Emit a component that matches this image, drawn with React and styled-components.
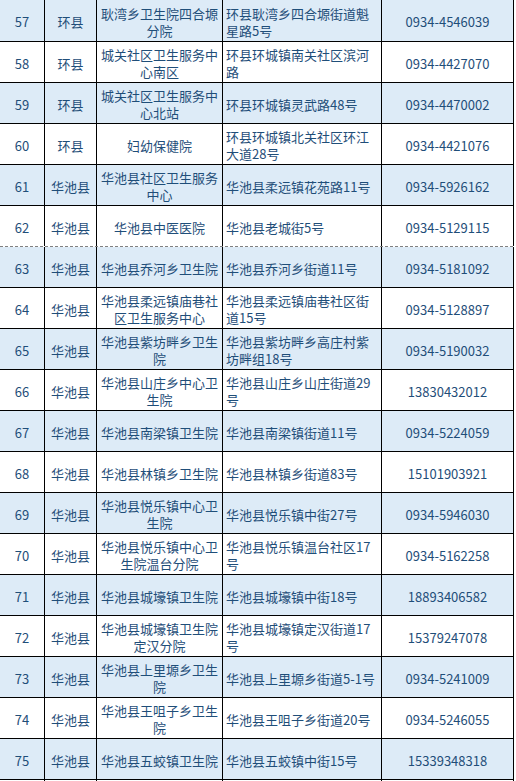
import React from 'react';
import styled, { createGlobalStyle, css, } from 'styled-components';


const GlobalStyle = createGlobalStyle`
body {
  margin: 0;
  background: #fff;
  font-family: "Noto Sans CJK SC", "Noto Sans", sans-serif;
}
`;

const Sheet = styled.div`
width: 514px;
color: #1f4e79;
font-size: 13px;
line-height: 17px;
`;

// page break line from the spreadsheet, drawn as a grey dash strip
const pageBreak = css`
border-bottom: none;
padding-bottom: 1px;
background:
  repeating-linear-gradient(90deg, #808080 0 3px, transparent 3px 5px) left bottom / 100% 1px no-repeat,
  ${({ $shaded, }) => $shaded ? '#ddebf7' : '#fff'};
`;

const Row = styled.div`
display: grid;
grid-template-columns: 45px 52px 126px 159px 132px;
box-sizing: border-box;
height: 41px;
border-bottom: 1px solid #000;
background: ${({ $shaded, }) => $shaded ? '#ddebf7' : '#fff'};
&:first-child {
  height: 42px;
}
${({ $break, }) => $break && pageBreak}
`;

const Cell = styled.div`
box-sizing: border-box;
display: flex;
align-items: center;
justify-content: ${({ $left, }) => $left ? 'flex-start' : 'center'};
text-align: ${({ $left, }) => $left ? 'left' : 'center'};
padding: 2px 3px 0;
border-right: 1px solid #000;
overflow: hidden;
`;


const rows = [
  [ 57, '环县', '耿湾乡卫生院四合塬分院', '环县耿湾乡四合塬街道魁星路5号', '0934-4546039', ],
  [ 58, '环县', '城关社区卫生服务中心南区', '环县环城镇南关社区滨河路', '0934-4427070', ],
  [ 59, '环县', '城关社区卫生服务中心北站', '环县环城镇灵武路48号', '0934-4470002', ],
  [ 60, '环县', '妇幼保健院', '环县环城镇北关社区环江大道28号', '0934-4421076', ],
  [ 61, '华池县', '华池县社区卫生服务中心', '华池县柔远镇花苑路11号', '0934-5926162', ],
  [ 62, '华池县', '华池县中医医院', '华池县老城街5号', '0934-5129115', ],
  [ 63, '华池县', '华池县乔河乡卫生院', '华池县乔河乡街道11号', '0934-5181092', ],
  [ 64, '华池县', '华池县柔远镇庙巷社区卫生服务中心', '华池县柔远镇庙巷社区街道15号', '0934-5128897', ],
  [ 65, '华池县', '华池县紫坊畔乡卫生院', '华池县紫坊畔乡高庄村紫坊畔组18号', '0934-5190032', ],
  [ 66, '华池县', '华池县山庄乡中心卫生院', '华池县山庄乡山庄街道29号', '13830432012', ],
  [ 67, '华池县', '华池县南梁镇卫生院', '华池县南梁镇街道11号', '0934-5224059', ],
  [ 68, '华池县', '华池县林镇乡卫生院', '华池县林镇乡街道83号', '15101903921', ],
  [ 69, '华池县', '华池县悦乐镇中心卫生院', '华池县悦乐镇中街27号', '0934-5946030', ],
  [ 70, '华池县', '华池县悦乐镇中心卫生院温台分院', '华池县悦乐镇温台社区17号', '0934-5162258', ],
  [ 71, '华池县', '华池县城壕镇卫生院', '华池县城壕镇中街18号', '18893406582', ],
  [ 72, '华池县', '华池县城壕镇卫生院定汉分院', '华池县城壕镇定汉街道17号', '15379247078', ],
  [ 73, '华池县', '华池县上里塬乡卫生院', '华池县上里塬乡街道5-1号', '0934-5241009', ],
  [ 74, '华池县', '华池县王咀子乡卫生院', '华池县王咀子乡街道20号', '0934-5246055', ],
  [ 75, '华池县', '华池县五蛟镇卫生院', '华池县五蛟镇中街15号', '15339348318', ],
  [ 76, '', '', '', '', ],
];


const App = () => (
  <>
    <GlobalStyle />
    <Sheet>
      {rows.map(([ no, county, name, address, phone, ]) => (
        <Row key={`row-${no}`} $shaded={no % 2 === 1} $break={no === 62}>
          <Cell>{no === 76 ? '' : no}</Cell>
          <Cell>{county}</Cell>
          <Cell>{name}</Cell>
          <Cell $left>{address}</Cell>
          <Cell>{phone}</Cell>
        </Row>
      ))}
    </Sheet>
  </>
);


export default App;
